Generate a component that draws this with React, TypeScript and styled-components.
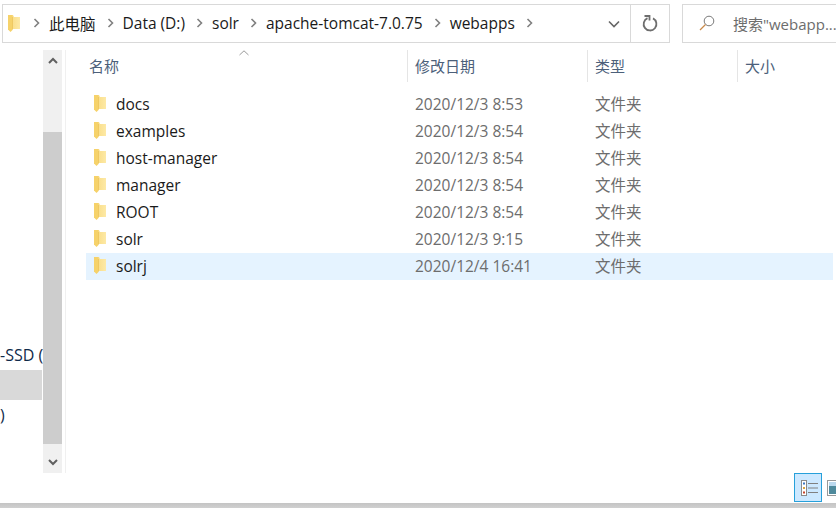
import React from "react";
import styled, { createGlobalStyle } from "styled-components";

const Global = createGlobalStyle`
  html, body { margin: 0; padding: 0; background: #fff; }
  body { font-family: "Open Sans", "Noto Sans CJK SC", sans-serif; }
`;

const Window = styled.div`
  width: 836px;
  height: 508px;
  overflow: hidden;
  display: flex;
  flex-direction: column;
  box-sizing: border-box;
`;

const TopBar = styled.div`
  display: flex;
  padding: 4px 0 0 2px;
  height: 47px;
  box-sizing: border-box;
  flex: none;
`;

const AddressBox = styled.div`
  width: 668px;
  height: 39px;
  box-sizing: border-box;
  border: 1px solid #d9d9d9;
  display: flex;
  align-items: center;
  flex: none;
`;

const Crumbs = styled.div`
  flex: 1;
  display: flex;
  align-items: center;
  padding: 0 0 1px 5px;
  font-size: 15.5px;
  color: #1a1a1a;
`;

const CrumbFolder = styled.span`
  display: flex;
  margin-right: 13px;
`;

const CrumbText = styled.span`
  margin: 0 11px 0 8px;
  white-space: nowrap;
`;

const Dropdown = styled.div`
  width: 33px;
  display: flex;
  justify-content: center;
  color: #666;
`;

const Refresh = styled.div`
  width: 39px;
  height: 100%;
  box-sizing: border-box;
  border-left: 1px solid #d9d9d9;
  display: flex;
  align-items: center;
  justify-content: center;
`;

const SearchBox = styled.div`
  margin-left: 12px;
  flex: 1;
  height: 39px;
  box-sizing: border-box;
  border: 1px solid #d9d9d9;
  border-right: none;
  display: flex;
  align-items: center;
  padding: 0 0 1px 16px;
  gap: 18px;
  font-size: 15px;
  color: #6d6d6d;
  white-space: nowrap;
`;

const Main = styled.div`
  display: flex;
  height: 423px;
  flex: none;
  margin-top: 3px;
`;

const NavPane = styled.div`
  width: 43px;
  flex: none;
  overflow: hidden;
  padding-top: 290px;
  box-sizing: border-box;
  font-size: 16px;
  color: #0f2a4a;
`;

const NavRow = styled.div<{ $selected?: boolean }>`
  height: 30px;
  width: 42px;
  line-height: 30px;
  white-space: nowrap;
  background: ${({ $selected }) => ($selected ? "#d9d9d9" : "transparent")};
`;

const Scrollbar = styled.div`
  width: 19px;
  flex: none;
  background: #f0f0f0;
  display: flex;
  flex-direction: column;
`;

const ScrollButton = styled.div<{ $height: number; $top: number }>`
  height: ${({ $height }) => $height}px;
  padding-top: ${({ $top }) => $top}px;
  box-sizing: border-box;
  flex: none;
  display: flex;
  align-items: flex-start;
  justify-content: center;
`;

const ScrollThumb = styled.div`
  flex: 1;
  background: #cdcdcd;
`;

const FilePane = styled.div`
  flex: 1;
  margin-left: 3px;
  border-left: 1px solid #f0f0f0;
  position: relative;
  padding-left: 20px;
`;

const SortArrow = styled.svg`
  position: absolute;
  left: 173px;
  top: 0;
`;

const HeaderRow = styled.div`
  display: grid;
  grid-template-columns: 321px 180px 150px 1fr;
  height: 32px;
  margin-bottom: 9px;
`;

const HeaderCell = styled.div<{ $first?: boolean }>`
  border-left: ${({ $first }) => ($first ? "none" : "1px solid #e5e5e5")};
  padding-left: ${({ $first }) => ($first ? "3px" : "7px")};
  font-size: 15px;
  line-height: 32px;
  color: #4c607a;
`;

const FileRow = styled.div<{ $selected?: boolean }>`
  display: grid;
  grid-template-columns: 321px 180px 1fr;
  height: 27px;
  width: 747px;
  align-items: center;
  padding-bottom: 2px;
  box-sizing: border-box;
  background: ${({ $selected }) => ($selected ? "#e5f3ff" : "transparent")};
`;

const NameCell = styled.div`
  display: flex;
  align-items: center;
  gap: 10px;
  padding-left: 8px;
  font-size: 15.5px;
  color: #1a1a1a;
`;

const MetaCell = styled.div`
  font-size: 15.5px;
  color: #6d6d6d;
  padding-left: 8px;
`;

const Footer = styled.div`
  flex: 1;
  display: flex;
  justify-content: flex-end;
  background: linear-gradient(#fff 0, #fff 30px, #c4c4c4 30px, #d0d0d0 100%);
`;

const ViewButton = styled.div`
  width: 28px;
  height: 29px;
  box-sizing: border-box;
  border: 1px solid #26a0da;
  background: #cce8ff;
  display: flex;
  align-items: center;
  justify-content: center;
  padding-left: 3px;
`;

const ThumbButton = styled.div`
  margin-left: 5px;
  width: 9px;
  height: 29px;
  overflow: hidden;
  display: flex;
  align-items: center;
`;

const Folder: React.FC = () => {
  const id = React.useId();
  return (
    <svg width="12" height="17" viewBox="0 0 12 17" style={{ flex: "none" }}>
      <defs>
        <linearGradient id={id} x1="0" x2="1" y1="0" y2="0">
          <stop offset="0" stopColor="#f8d97c" />
          <stop offset="1" stopColor="#fde9a6" />
        </linearGradient>
      </defs>
      <path d="M0 0 H5 L6 2 H12 V14 H0 Z" fill={`url(#${id})`} />
      <path d="M0 0 H4.5 V15 L2.5 17 L0 14.5 Z" fill="#f6d26a" />
      <path d="M4.5 2 V14.5" stroke="#e8bd52" strokeWidth="0.6" />
    </svg>
  );
};

const Chevron: React.FC = () => (
  <svg width="8" height="10" viewBox="0 0 8 10" style={{ flex: "none" }}>
    <path d="M1.5 1 L5.5 5 L1.5 9" fill="none" stroke="#808080" strokeWidth="1.6" />
  </svg>
);

const crumbs = ["此电脑", "Data (D:)", "solr", "apache-tomcat-7.0.75", "webapps"];

const files = [
  { name: "docs", date: "2020/12/3 8:53" },
  { name: "examples", date: "2020/12/3 8:54" },
  { name: "host-manager", date: "2020/12/3 8:54" },
  { name: "manager", date: "2020/12/3 8:54" },
  { name: "ROOT", date: "2020/12/3 8:54" },
  { name: "solr", date: "2020/12/3 9:15" },
  { name: "solrj", date: "2020/12/4 16:41", selected: true },
];

export default function App() {
  return (
    <Window>
      <Global />
      <TopBar>
        <AddressBox>
          <Crumbs>
            <CrumbFolder>
              <Folder />
            </CrumbFolder>
            <Chevron />
            {crumbs.map((c) => (
              <React.Fragment key={c}>
                <CrumbText>{c}</CrumbText>
                <Chevron />
              </React.Fragment>
            ))}
          </Crumbs>
          <Dropdown>
            <svg width="12" height="8" viewBox="0 0 12 8">
              <path d="M1 1.5 L6 6.5 L11 1.5" fill="none" stroke="#666" strokeWidth="1.6" />
            </svg>
          </Dropdown>
          <Refresh>
            <svg width="16" height="17" viewBox="0 0 16 17">
              <path d="M5.5 3.2 A6.4 6.4 0 1 0 11 3.4" fill="none" stroke="#6e6e6e" strokeWidth="1.8" />
              <path d="M2.5 1 L7.5 1 L7.5 5.5" fill="none" stroke="#6e6e6e" strokeWidth="1.8" />
            </svg>
          </Refresh>
        </AddressBox>
        <SearchBox>
          <svg width="16" height="16" viewBox="0 0 16 16" style={{ flex: "none" }}>
            <circle cx="10" cy="6" r="4.8" fill="none" stroke="#7a7a7a" strokeWidth="1" />
            <path d="M6.5 9.5 L1 15" stroke="#c98a4a" strokeWidth="1.2" />
          </svg>
          <span>搜索"webapp...</span>
        </SearchBox>
      </TopBar>
      <Main>
        <NavPane>
          <NavRow>-SSD (</NavRow>
          <NavRow $selected />
          <NavRow>)</NavRow>
        </NavPane>
        <Scrollbar>
          <ScrollButton $height={82} $top={7}>
            <svg width="10" height="8" viewBox="0 0 10 8">
              <path d="M1 6 L5 2 L9 6" fill="none" stroke="#606060" strokeWidth="2" />
            </svg>
          </ScrollButton>
          <ScrollThumb />
          <ScrollButton $height={29} $top={14}>
            <svg width="10" height="8" viewBox="0 0 10 8">
              <path d="M1 2 L5 6 L9 2" fill="none" stroke="#606060" strokeWidth="2" />
            </svg>
          </ScrollButton>
        </Scrollbar>
        <FilePane>
          <SortArrow width="10" height="6" viewBox="0 0 10 6">
            <path d="M0.5 5 L5 0.8 L9.5 5" fill="none" stroke="#9a9a9a" strokeWidth="1" />
          </SortArrow>
          <HeaderRow>
            <HeaderCell $first>名称</HeaderCell>
            <HeaderCell>修改日期</HeaderCell>
            <HeaderCell>类型</HeaderCell>
            <HeaderCell>大小</HeaderCell>
          </HeaderRow>
          {files.map((f) => (
            <FileRow key={f.name} $selected={f.selected}>
              <NameCell>
                <Folder />
                {f.name}
              </NameCell>
              <MetaCell>{f.date}</MetaCell>
              <MetaCell>文件夹</MetaCell>
            </FileRow>
          ))}
        </FilePane>
      </Main>
      <Footer>
        <ViewButton>
          <svg width="18" height="16" viewBox="0 0 18 16">
            <rect x="0.5" y="0.5" width="5" height="15" fill="#fff" stroke="#8a8a8a" />
            <rect x="2" y="2.5" width="2" height="2" fill="#3b78c4" />
            <rect x="2" y="7" width="2" height="2" fill="#d9a441" />
            <rect x="2" y="11.5" width="2" height="2" fill="#c8452c" />
            <path d="M7 3.5 H17 M7 8 H17 M7 12.5 H17" stroke="#808080" strokeWidth="1" />
          </svg>
        </ViewButton>
        <ThumbButton>
          <svg width="14" height="16" viewBox="0 0 14 16" style={{ flex: "none" }}>
            <rect x="0.5" y="0.5" width="13" height="15" fill="#fff" stroke="#999" />
            <rect x="2" y="2" width="10" height="12" fill="#4f8a9c" />
            <rect x="2" y="2" width="10" height="4" fill="#bcd9ee" />
          </svg>
        </ThumbButton>
      </Footer>
    </Window>
  );
}
